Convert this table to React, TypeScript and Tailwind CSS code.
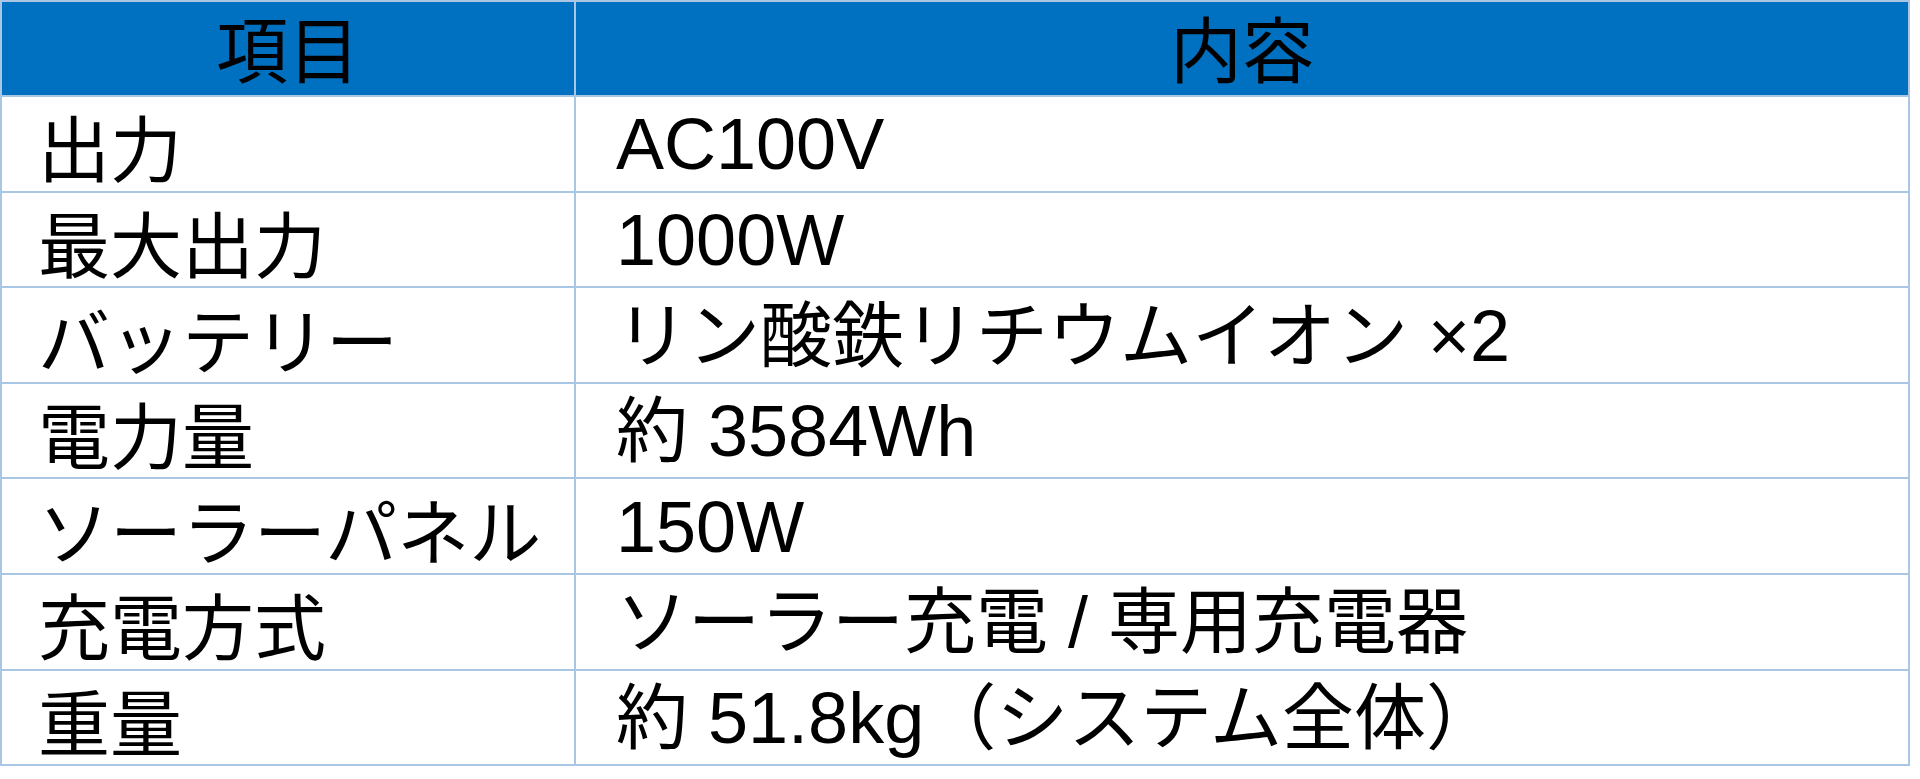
import React from "react";

const rows: [string, string][] = [
  ["出力", "AC100V"],
  ["最大出力", "1000W"],
  ["バッテリー", "リン酸鉄リチウムイオン ×2"],
  ["電力量", "約 3584Wh"],
  ["ソーラーパネル", "150W"],
  ["充電方式", "ソーラー充電 / 専用充電器"],
  ["重量", "約 51.8kg（システム全体）"],
];

export default function App() {
  return (
    <div className="w-[1920px] h-[779px] bg-white overflow-hidden">
      <div className="w-[1910px] grid grid-cols-[572px_1332px] grid-rows-[93px_repeat(7,93.6px)] gap-[2px] p-[2px] bg-[#a9c6e4]">
        <div className="bg-[#0070c0] flex items-center justify-center pb-[4px] text-black text-[72px] leading-[1.15] [font-family:'Noto_Sans_CJK_JP',sans-serif]">
          項目
        </div>
        <div className="bg-[#0070c0] flex items-center justify-center pb-[4px] text-black text-[72px] leading-[1.15] [font-family:'Noto_Sans_CJK_JP',sans-serif]">
          内容
        </div>
        {rows.map(([k, v]) => (
          <React.Fragment key={k}>
            <div className="bg-white flex items-center pl-[36px] pt-[4px] text-black text-[72px] leading-[1.15] whitespace-nowrap [font-family:'Noto_Sans_CJK_JP',sans-serif]">
              {k}
            </div>
            <div className="bg-white flex items-center pl-[40px] pt-[2px] text-black text-[72px] leading-[1.15] whitespace-nowrap [font-family:'Liberation_Sans','Noto_Sans_CJK_JP',sans-serif]">
              {v}
            </div>
          </React.Fragment>
        ))}
      </div>
    </div>
  );
}
